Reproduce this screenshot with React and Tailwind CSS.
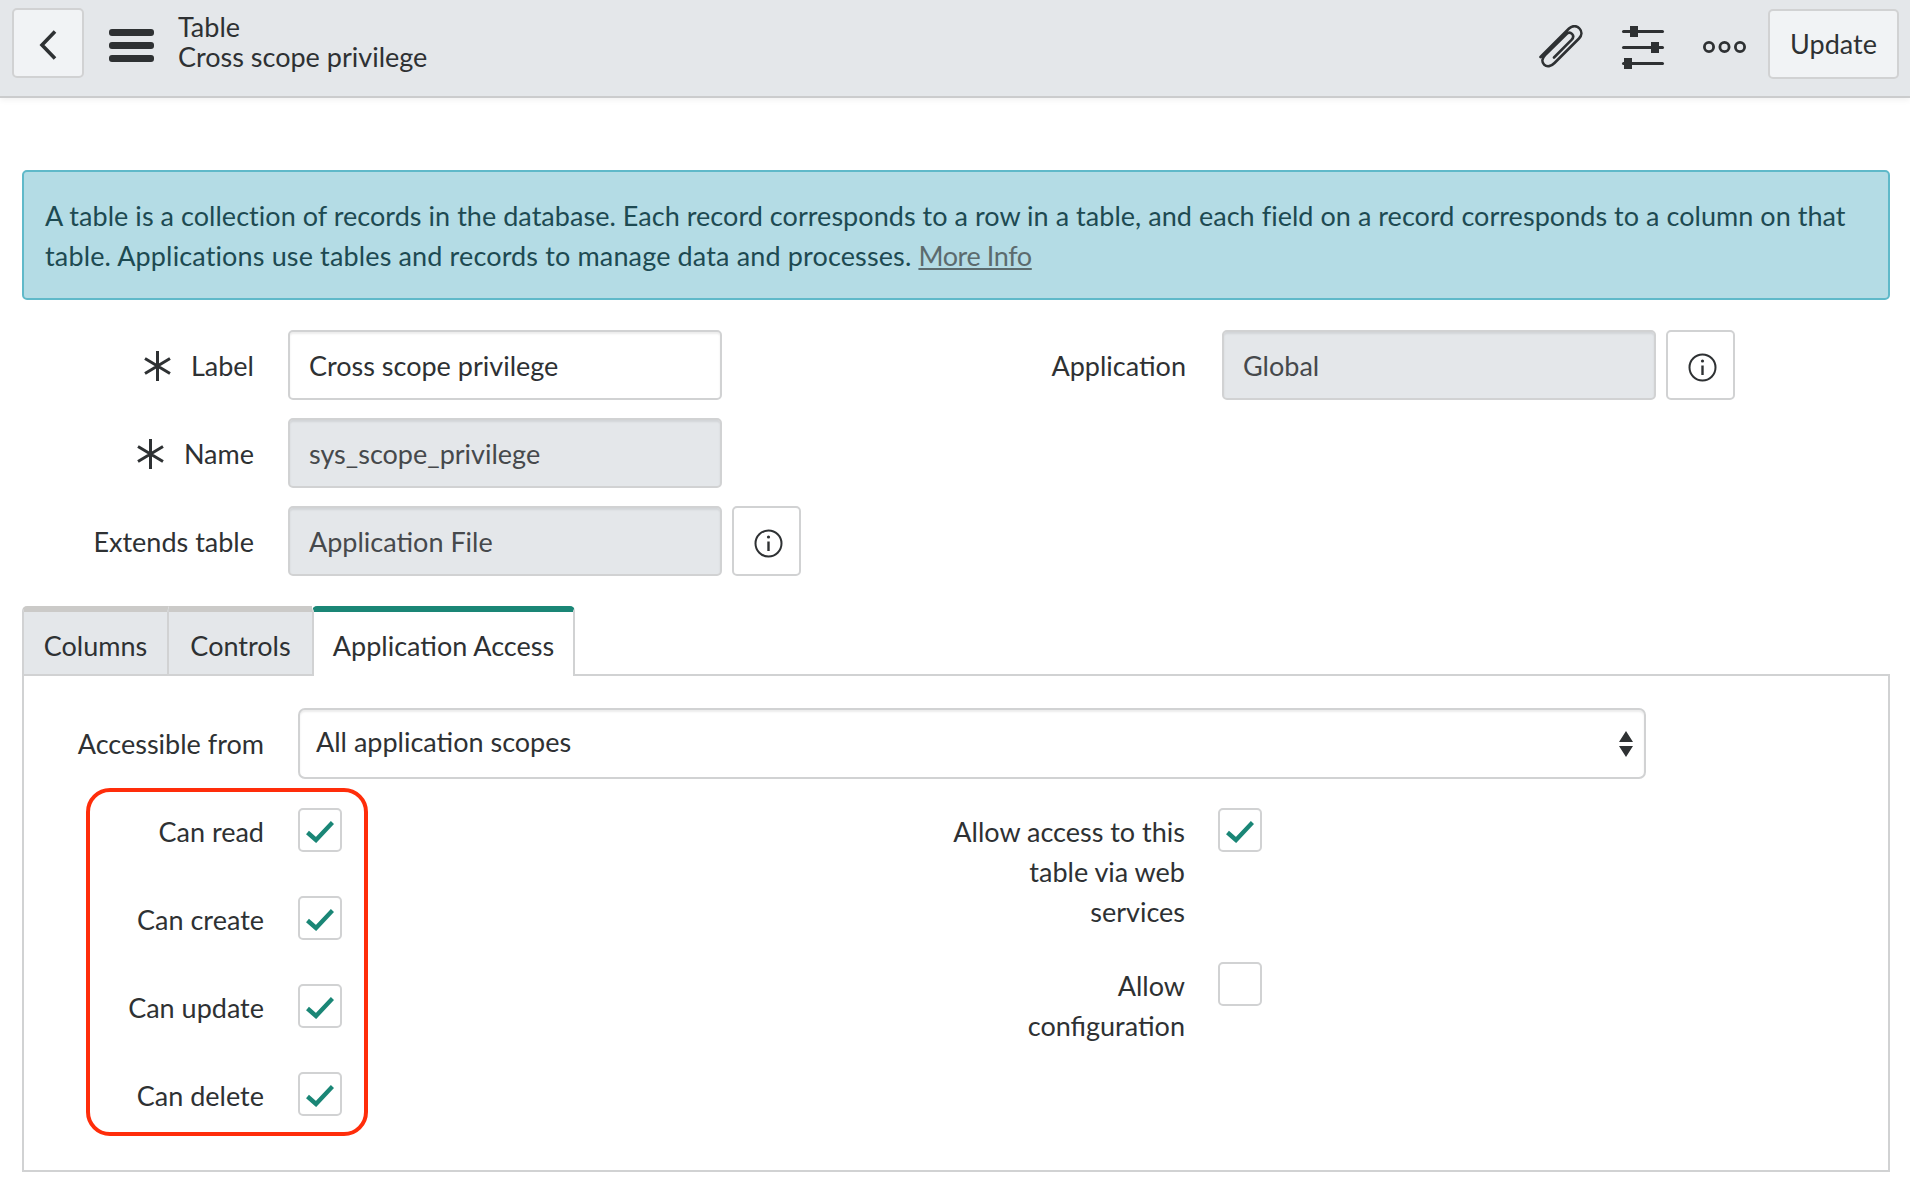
// Table record form, Application Access tab
function Asterisk() {
  return (
    <svg width="29" height="30" viewBox="0 0 29 30" fill="none" stroke="#2e3133" strokeWidth="3">
      <path d="M14.5 0v30M2 7.5l25 15M27 7.5l-25 15" />
    </svg>
  );
}

function InfoButton() {
  return (
    <button
      type="button"
      className="flex h-full w-[69px] items-center justify-center rounded-[5px] border-2 border-[#d1d2d3] bg-white pl-[4px] pt-[5px]"
    >
      <svg width="29" height="29" viewBox="0 0 29 29" fill="none" stroke="#2e3133" strokeWidth="2">
        <circle cx="14.5" cy="14.5" r="13" />
        <path d="M14.5 12.5v9.5" strokeWidth="2.4" />
        <circle cx="14.5" cy="8" r="1.6" fill="#2e3133" stroke="none" />
      </svg>
    </button>
  );
}

function Field({ value, disabled }) {
  return (
    <div
      className={`flex h-full w-[434px] items-center rounded-[5px] border-2 border-[#d1d2d3] pl-[19px] pt-[2px] shadow-[inset_0_2px_2px_rgba(0,0,0,0.08)] ${
        disabled ? 'bg-[#e4e7ea] text-[#46494c]' : 'bg-white'
      }`}
    >
      {value}
    </div>
  );
}

function Checkbox({ checked }) {
  return (
    <div className="flex h-[44px] w-[44px] shrink-0 items-center justify-center rounded-[5px] border-2 border-[#d1d2d3] bg-white pt-[3px]">
      {checked && (
        <svg width="28" height="22" viewBox="0 0 28 22" fill="none" stroke="#1a8676" strokeWidth="4.4">
          <path d="M1.5 11.5l8.5 7.5L26.5 1.5" />
        </svg>
      )}
    </div>
  );
}

function CheckRow({ label, checked = true }) {
  return (
    <div className="flex h-[44px] gap-[34px]">
      <div className="w-[240px] pt-[4px] text-right">{label}</div>
      <Checkbox checked={checked} />
    </div>
  );
}

export default function App() {
  return (
    <div className="h-[1184px] w-[1910px] overflow-hidden bg-white text-[27px] leading-[40px] text-[#2e3133] [font-family:Lato,sans-serif]">
      <header className="flex h-[98px] items-start border-b-2 border-[#cbcccd] bg-[#e4e7ea] shadow-[0_2px_6px_rgba(0,0,0,0.06)]">
        <button
          type="button"
          className="ml-[12px] mt-[8px] flex h-[70px] w-[72px] items-center justify-center rounded-[5px] border-2 border-[#d1d2d3] bg-[#f1f3f5] pt-[4px]"
        >
          <svg width="18" height="30" viewBox="0 0 18 30" fill="none" stroke="#2e3133" strokeWidth="3.6">
            <path d="M16 1.5L3 15l13 13.5" />
          </svg>
        </button>
        <div className="ml-[25px] mt-[29px] flex w-[45px] flex-col gap-[6px]">
          <div className="h-[7px] rounded-[3px] bg-[#2e3133]" />
          <div className="h-[7px] rounded-[3px] bg-[#2e3133]" />
          <div className="h-[7px] rounded-[3px] bg-[#2e3133]" />
        </div>
        <div className="ml-[24px] mt-[12px] leading-[30px]">
          <div>Table</div>
          <div>Cross scope privilege</div>
        </div>
        <div className="ml-auto flex items-start">
          <svg className="mt-[25px]" width="44" height="44" viewBox="0 0 44 44" fill="none" stroke="#2e3133" strokeWidth="2.6" strokeLinecap="round">
            <path d="M1.5 32L30 3.5c3.5-3.3 8-3 10.5 0 2.7 3 2.5 7-.5 10L15.5 38c-3.4 3.5-7.6 4.3-10.4 1.6-2.6-2.6-2-6.5 1-9.6L27 9.5c2-2 4.3-2.2 6-.6 1.6 1.6 1.4 4-.5 6L15 32.5" />
          </svg>
          <svg className="ml-[38px] mt-[25px]" width="44" height="44" viewBox="0 0 44 44" fill="#2e3133">
            <rect x="1" y="5" width="42" height="3" rx="1.5" />
            <rect x="9" y="1" width="8" height="11" />
            <rect x="1" y="21" width="42" height="3" rx="1.5" />
            <rect x="30" y="17" width="8" height="11" />
            <rect x="1" y="37" width="42" height="3" rx="1.5" />
            <rect x="3" y="33" width="8" height="11" />
          </svg>
          <svg className="ml-[37px] mt-[40px]" width="45" height="14" viewBox="0 0 45 14" fill="none" stroke="#2e3133" strokeWidth="2.8">
            <circle cx="7" cy="7" r="4.6" />
            <circle cx="22.5" cy="7" r="4.6" />
            <circle cx="38" cy="7" r="4.6" />
          </svg>
          <button
            type="button"
            className="ml-[21px] mr-[11px] mt-[9px] flex h-[70px] w-[131px] items-center justify-center rounded-[5px] border-2 border-[#d1d2d3] bg-[#f1f3f5]"
          >
            Update
          </button>
        </div>
      </header>

      <main className="pl-[22px] pr-[20px]">
        <div className="mt-[72px] rounded-[5px] border-2 border-[#5fb9c9] bg-[#b4dce5] pb-[22px] pl-[21px] pt-[24px] tracking-[0.04px] text-[#1d4a52] whitespace-nowrap">
          A table is a collection of records in the database. Each record corresponds to a row in a table, and each field on a record corresponds to a column on that
          <br />
          <span className="tracking-[0.14px]">table. Applications use tables and records to manage data and processes.</span>{' '}
          <a href="#more" className="tracking-[-0.4px] text-[#5c6b6e] underline">
            More Info
          </a>
        </div>

        <div className="mt-[30px] flex">
          <div className="flex w-[830px] flex-col gap-[18px]">
            <div className="flex h-[70px] gap-[34px]">
              <div className="flex w-[232px] items-center justify-end gap-[19px] pt-[2px]">
                <Asterisk />
                <span>Label</span>
              </div>
              <Field value="Cross scope privilege" />
            </div>
            <div className="flex h-[70px] gap-[34px]">
              <div className="flex w-[232px] items-center justify-end gap-[19px] pt-[2px]">
                <Asterisk />
                <span>Name</span>
              </div>
              <Field value="sys_scope_privilege" disabled />
            </div>
            <div className="flex h-[70px] gap-[34px]">
              <div className="flex w-[232px] items-center justify-end pt-[2px]">Extends table</div>
              <div className="flex h-full gap-[10px]">
                <Field value="Application File" disabled />
                <InfoButton />
              </div>
            </div>
          </div>
          <div className="flex h-[70px] gap-[36px]">
            <div className="flex w-[334px] items-center justify-end pt-[2px]">Application</div>
            <div className="flex h-full gap-[10px]">
              <Field value="Global" disabled />
              <InfoButton />
            </div>
          </div>
        </div>

        <div className="mt-[30px] flex h-[70px] items-stretch">
          <div className="flex h-[68px] w-[147px] items-center justify-center rounded-tl-[5px] border-l-2 border-r-2 border-t-[6px] border-l-[#d1d2d3] border-r-[#d1d2d3] border-t-[#cbcac8] bg-[#e4e7ea] pt-[6px]">
            Columns
          </div>
          <div className="flex h-[68px] w-[143px] items-center justify-center border-t-[6px] border-t-[#cbcac8] bg-[#e4e7ea] pt-[6px]">
            Controls
          </div>
          <div className="relative z-10 flex h-[70px] w-[263px] items-center justify-center rounded-t-[5px] border-l-2 border-r-2 border-t-[6px] border-l-[#d1d2d3] border-r-[#d1d2d3] border-t-[#1a8676] bg-white pt-[4px]">
            Application Access
          </div>
        </div>

        <section className="relative -mt-[2px] h-[498px] border-2 border-[#d1d2d3] pt-[32px]">
          <div className="flex h-[71px] gap-[34px]">
            <div className="flex w-[240px] items-center justify-end pt-[1px]">Accessible from</div>
            <div className="flex w-[1348px] items-center justify-between rounded-[7px] border-2 border-[#d1d2d3] pl-[16px] pr-[11px] shadow-[inset_0_2px_2px_rgba(0,0,0,0.08)]">
              <span className="pb-[3px]">All application scopes</span>
              <svg width="14" height="26" viewBox="0 0 14 26" fill="#2e3133">
                <path d="M7 0l7 11H0zM0 15h14L7 26z" />
              </svg>
            </div>
          </div>

          <div className="mt-[29px] flex">
            <div className="flex w-[318px] flex-col gap-[44px]">
              <CheckRow label="Can read" />
              <CheckRow label="Can create" />
              <CheckRow label="Can update" />
              <CheckRow label="Can delete" />
            </div>
            <div className="ml-[577px] flex flex-col gap-[34px]">
              <div className="flex h-[120px] gap-[33px]">
                <div className="w-[266px] pt-[4px] text-right">
                  Allow access to this
                  <br />
                  table via web
                  <br />
                  services
                </div>
                <Checkbox checked />
              </div>
              <div className="flex gap-[33px]">
                <div className="w-[266px] pt-[4px] text-right">
                  Allow
                  <br />
                  configuration
                </div>
                <Checkbox />
              </div>
            </div>
          </div>

          {/* red annotation around the four access checkboxes */}
          <div className="absolute left-[62px] top-[112px] h-[348px] w-[282px] rounded-[24px] border-4 border-[#ff2d0a]" />
        </section>
      </main>
    </div>
  );
}
